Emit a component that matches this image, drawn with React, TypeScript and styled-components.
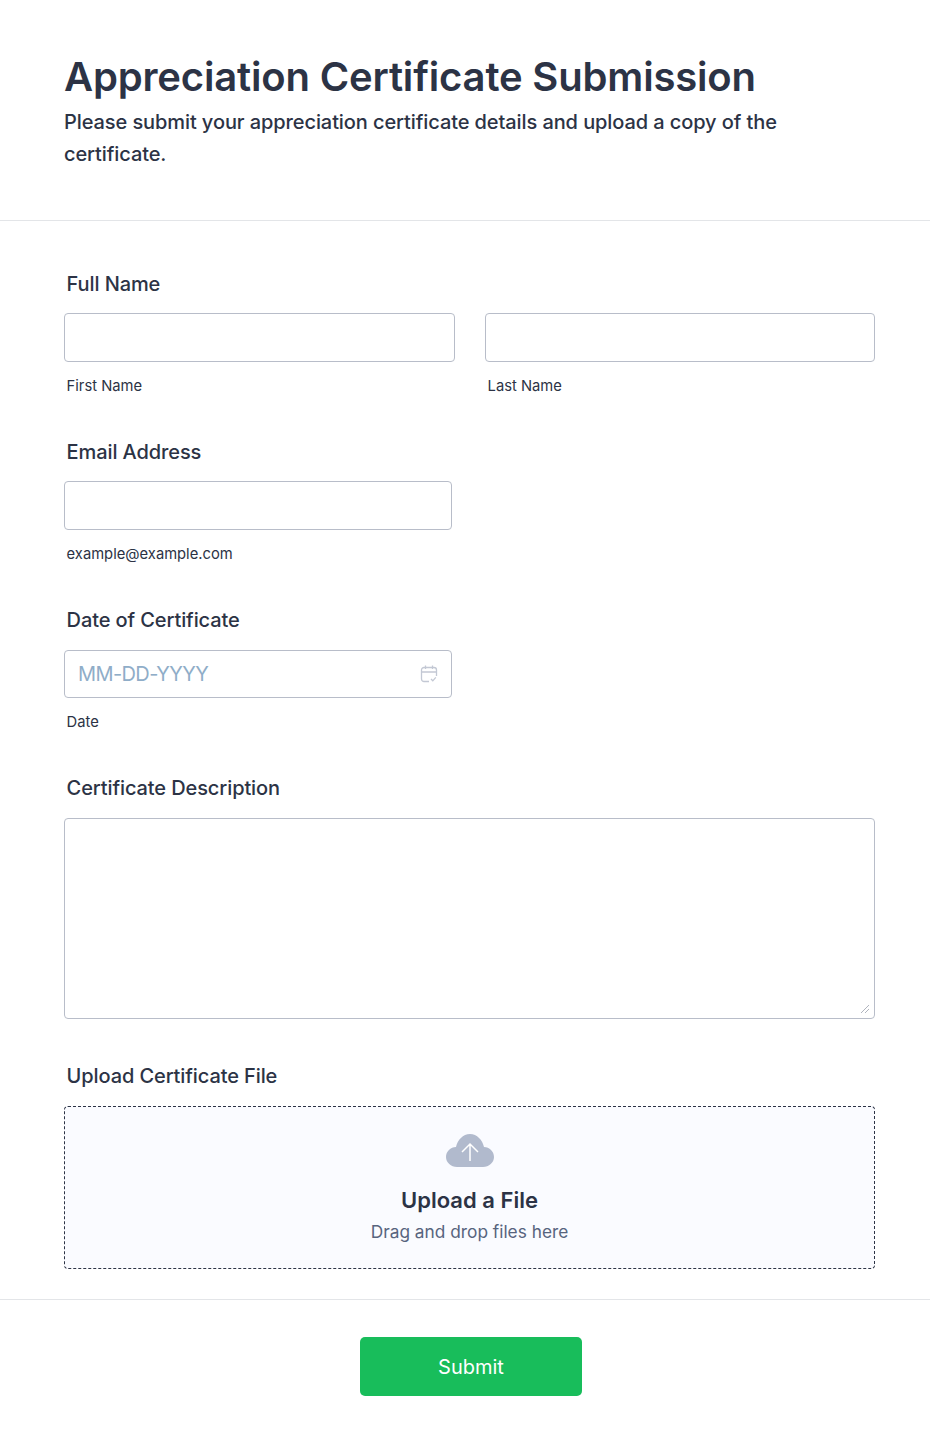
import React from "react";
import styled, { createGlobalStyle } from "styled-components";

const Global = createGlobalStyle`
  html, body { margin: 0; padding: 0; background: #fff; }
  body { font-family: Inter, "Liberation Sans", sans-serif; color: #2c3345; }
  * { box-sizing: border-box; }
`;

const Page = styled.div`
  width: 930px;
  height: 1446px;
  background: #fff;
`;

const Header = styled.header`
  height: 221px;
  padding: 52px 64px 0;
  border-bottom: 1px solid #e3e5e8;
`;

const Title = styled.h1`
  margin: 0;
  font-size: 40px;
  line-height: 50px;
  font-weight: 600;
  letter-spacing: -0.17px;
  color: #2c3345;
`;

const Subtitle = styled.p`
  margin: 4px 0 0;
  font-size: 20px;
  line-height: 32px;
  font-weight: 500;
  letter-spacing: -0.09px;
  color: #2c3345;
  max-width: 780px;
`;

const Form = styled.div`
  padding: 48px 55px 30px 64px;
  display: flex;
  flex-direction: column;
  gap: 41px;
`;

const Field = styled.div`
  display: flex;
  flex-direction: column;
`;

const Label = styled.label`
  font-size: 20px;
  line-height: 30px;
  font-weight: 500;
  letter-spacing: -0.1px;
  color: #2c3345;
  padding-left: 2.6px;
  margin-bottom: 14px;
  height: 30px;
`;

const Row = styled.div`
  display: flex;
  gap: 30px;
`;

const Column = styled.div<{ $width: number }>`
  width: ${(p) => p.$width}px;
  display: flex;
  flex-direction: column;
`;

const Input = styled.div`
  height: 49px;
  border: 1px solid #b8bdc9;
  border-radius: 4px;
  background: #fff;
  display: flex;
  align-items: center;
  justify-content: space-between;
  padding: 0 13px;
`;

const DateInput = styled(Input)`
  height: 48px;
  margin-top: 1px;
`;

const Placeholder = styled.span`
  font-size: 20px;
  letter-spacing: -0.6px;
  color: #8fadc8;
`;

const Sub = styled.span`
  font-size: 14.75px;
  line-height: 20px;
  font-weight: 400;
  color: #2c3345;
  padding-left: 2.6px;
  margin-top: 14px;
`;

const TextArea = styled.div`
  position: relative;
  height: 201px;
  margin: 1px 0 1px;
  border: 1px solid #b8bdc9;
  border-radius: 4px;
`;

const Grip = styled.svg`
  position: absolute;
  right: 4px;
  bottom: 4px;
`;

const Drop = styled.div`
  height: 163px;
  margin-top: 1px;
  border: 1px dashed #2c3345;
  border-radius: 4px;
  background: #fafbff;
  display: flex;
  flex-direction: column;
  align-items: center;
  padding-top: 27px;
`;

const DropTitle = styled.div`
  font-size: 22px;
  line-height: 30px;
  font-weight: 600;
  color: #2c3345;
  margin-top: 17px;
`;

const DropSub = styled.div`
  font-size: 17.3px;
  line-height: 28px;
  color: #57647e;
  margin-top: 3px;
`;

const Footer = styled.footer`
  border-top: 1px solid #e3e5e8;
  padding-top: 37px;
  display: flex;
  justify-content: center;
`;

const Submit = styled.button`
  width: 222px;
  height: 59px;
  margin-left: 12px;
  border: 0;
  border-radius: 5px;
  background: #18bd5b;
  color: #fff;
  font-family: inherit;
  font-size: 20px;
  font-weight: 400;
`;

export default function App() {
  return (
    <Page>
      <Global />
      <Header>
        <Title>Appreciation Certificate Submission</Title>
        <Subtitle>Please submit your appreciation certificate details and upload a copy of the certificate.</Subtitle>
      </Header>
      <Form>
        <Field>
          <Label>Full Name</Label>
          <Row>
            <Column $width={391}><Input /><Sub>First Name</Sub></Column>
            <Column $width={390}><Input /><Sub>Last Name</Sub></Column>
          </Row>
        </Field>
        <Field>
          <Label>Email Address</Label>
          <Column $width={388}><Input /><Sub>example@example.com</Sub></Column>
        </Field>
        <Field>
          <Label>Date of Certificate</Label>
          <Column $width={388}>
            <DateInput>
              <Placeholder>MM-DD-YYYY</Placeholder>
              <svg width="18" height="18" viewBox="0 0 18 18" fill="none" stroke="#c3c8d4" strokeWidth="1.3">
                <path d="M9 16.500H4a2.500 2.500 0 0 1-2.500-2.500V5A2.500 2.500 0 0 1 4 2.500h10A2.500 2.500 0 0 1 16.500 5v6" />
                <path d="M1.500 7h15M5.500 .5v3.500M12.500 .5v3.500M11 14l1.800 1.800 3-3.500" />
              </svg>
            </DateInput>
            <Sub>Date</Sub>
          </Column>
        </Field>
        <Field>
          <Label>Certificate Description</Label>
          <TextArea>
            <Grip width="10" height="10" viewBox="0 0 10 10" stroke="#b0b4be" strokeWidth="1">
              <path d="M1 9l8-8M5 9l4-4" />
            </Grip>
          </TextArea>
        </Field>
        <Field>
          <Label>Upload Certificate File</Label>
          <Drop>
            <svg width="48" height="34" viewBox="0 0 48 34">
              <path fill="#b1bacd" d="M11 33C5 33 0 28.500 0 23C0 17.500 4.500 13 10 13C11.500 6 17 0 24 0C31 0 36.500 6 38 13C43.500 13 48 17.500 48 23C48 28.500 43 33 37 33Z" />
              <path fill="none" stroke="#fff" strokeWidth="1.500" d="M24 27V10M16 18l8-8 8 8" />
            </svg>
            <DropTitle>Upload a File</DropTitle>
            <DropSub>Drag and drop files here</DropSub>
          </Drop>
        </Field>
      </Form>
      <Footer><Submit>Submit</Submit></Footer>
    </Page>
  );
}
